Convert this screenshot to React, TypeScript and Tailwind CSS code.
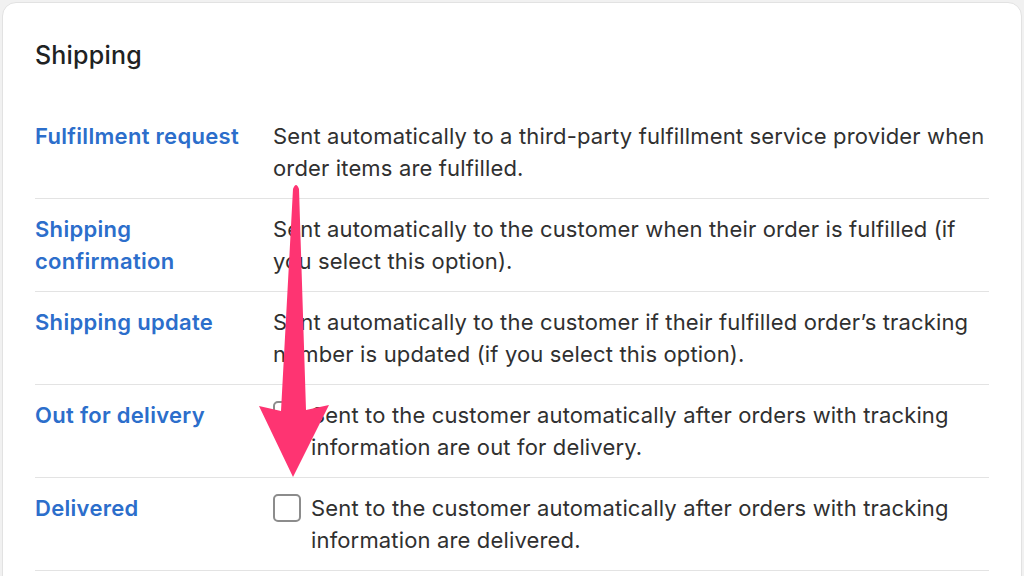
const rows: { label: string[]; text: string; checkbox?: boolean }[] = [
  {
    label: ["Fulfillment request"],
    text: "Sent automatically to a third-party fulfillment service provider when order items are fulfilled.",
  },
  {
    label: ["Shipping", "confirmation"],
    text: "Sent automatically to the customer when their order is fulfilled (if you select this option).",
  },
  {
    label: ["Shipping update"],
    text: "Sent automatically to the customer if their fulfilled order’s tracking number is updated (if you select this option).",
  },
  {
    label: ["Out for delivery"],
    text: "Sent to the customer automatically after orders with tracking information are out for delivery.",
    checkbox: true,
  },
  {
    label: ["Delivered"],
    text: "Sent to the customer automatically after orders with tracking information are delivered.",
    checkbox: true,
  },
];

export default function App() {
  return (
    <div
      className="relative h-[576px] w-[1024px] overflow-hidden bg-[#f1f1f1] p-[2px]"
      style={{ fontFamily: "Inter, 'Noto Sans', sans-serif" }}
    >
      <div className="h-[600px] w-[1020px] rounded-[14px] border border-[#e2e2e2] bg-white px-[32px] pt-[36px]">
        <h2 className="text-[25px] font-medium leading-[32px] tracking-[0.2px] text-[#202223]">Shipping</h2>
        <div className="mt-[35px]">
          {rows.map((r) => (
            <div key={r.label.join(" ")} className="flex border-b border-[#e3e3e3] py-[14px] text-[22px] leading-[32px]">
              <div className="w-[238px] shrink-0 font-semibold tracking-[0.3px] text-[#2c6ecb]">
                {r.label.map((l) => (
                  <div key={l}>{l}</div>
                ))}
              </div>
              {r.checkbox ? (
                <div className="flex gap-[10px]">
                  <div className="mt-[2px] h-[28px] w-[28px] shrink-0 rounded-[5px] border-2 border-[#8c8c8c] bg-white" />
                  <p className="tracking-[0.15px] text-[#303030]">{r.text}</p>
                </div>
              ) : (
                <p className="tracking-[0.15px] text-[#303030]">{r.text}</p>
              )}
            </div>
          ))}
        </div>
      </div>

      <svg className="absolute left-0 top-0" width="1024" height="576" viewBox="0 0 1024 576">
        <path
          d="M293 189 Q296 181 299 189 L306 410 L329 405 L293 477 L259 406 L281 411 Z"
          fill="#fe3472"
        />
      </svg>
    </div>
  );
}
